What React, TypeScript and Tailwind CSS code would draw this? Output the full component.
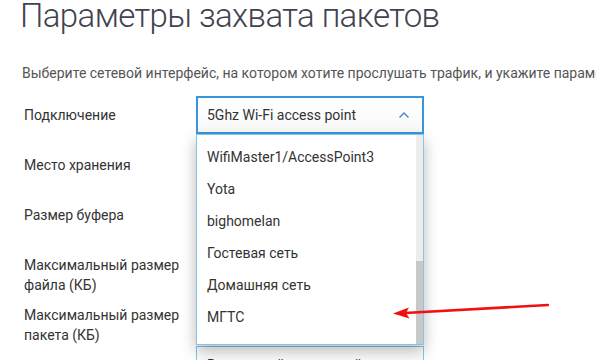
const rows = [
  { label: "Подключение", open: true },
  { label: "Место хранения" },
  { label: "Размер буфера" },
  { label: "Максимальный размер файла (КБ)" },
  { label: "Максимальный размер пакета (КБ)" },
  { label: "", value: "Внутренний системный" },
];

const options = [
  "WifiMaster1/AccessPoint3",
  "Yota",
  "bighomelan",
  "Гостевая сеть",
  "Домашняя сеть",
  "МГТС",
];

function ChevronUp() {
  return (
    <svg width="12" height="8" viewBox="0 0 12 8" className="text-[#4a86c8]">
      <path d="M1.5 6.5 L6 2 L10.5 6.5" fill="none" stroke="currentColor" strokeWidth="1.4" />
    </svg>
  );
}

function Dropdown() {
  return (
    <div className="absolute left-0 top-[38px] z-10 flex h-[211px] w-[228px] border border-[#86c5ea] bg-white shadow-[0_6px_14px_rgba(0,0,0,0.28)]">
      <ul className="flex-1 pt-[6px]">
        {options.map((o) => (
          <li key={o} className="flex h-[32px] items-center px-[10px] text-[14px] text-[#333]">
            {o}
          </li>
        ))}
      </ul>
      <div className="flex w-[7px] flex-col bg-[#ececec]">
        <div className="h-[126px]" />
        <div className="flex-1 bg-[#c8c8c8]" />
      </div>
    </div>
  );
}

export default function App() {
  return (
    <div className="relative h-[360px] w-[596px] overflow-hidden bg-white font-['Roboto',sans-serif]">
      <h1 className="pl-[20px] text-[33px] font-light leading-[32px] tracking-[-0.6px] text-[#42424f]">
        Параметры захвата пакетов
      </h1>
      <p className="mt-[31px] whitespace-nowrap pl-[22px] text-[14px] leading-[20px] text-[#555]">
        Выберите сетевой интерфейс, на котором хотите прослушать трафик, и укажите параметры захвата
      </p>

      <div className="mt-[13px] flex flex-col">
        {rows.map((r, i) => (
          <div key={i} className="flex h-[50px]">
            <div className="w-[196px] pl-[24px] pr-[10px] pt-[9px] text-[14px] leading-[20px] text-[#333]">
              {r.label}
            </div>
            <div className="relative">
              {r.open ? (
                <>
                  <div className="flex h-[38px] w-[228px] items-center justify-between border-2 border-[#3a96dc] bg-gradient-to-b from-white to-[#f9f9f9] pl-[9px] pr-[12px] text-[14px] text-[#333]">
                    <span>5Ghz Wi-Fi access point</span>
                    <ChevronUp />
                  </div>
                  <Dropdown />
                </>
              ) : (
                <div className="flex h-[38px] w-[228px] items-center border border-[#8ac6e8] bg-gradient-to-b from-white to-[#f6f6f6] px-[10px] text-[14px] text-[#333]">
                  {r.value ?? ""}
                </div>
              )}
            </div>
          </div>
        ))}
      </div>

      <svg className="absolute left-0 top-0 z-20" width="596" height="360" viewBox="0 0 596 360">
        <line x1="548" y1="305" x2="405" y2="313" stroke="#f01010" strokeWidth="2.5" strokeLinecap="round" />
        <path d="M393 313.6 L409 307.5 L406 313 L409.5 318.5 Z" fill="#f01010" />
      </svg>
    </div>
  );
}
